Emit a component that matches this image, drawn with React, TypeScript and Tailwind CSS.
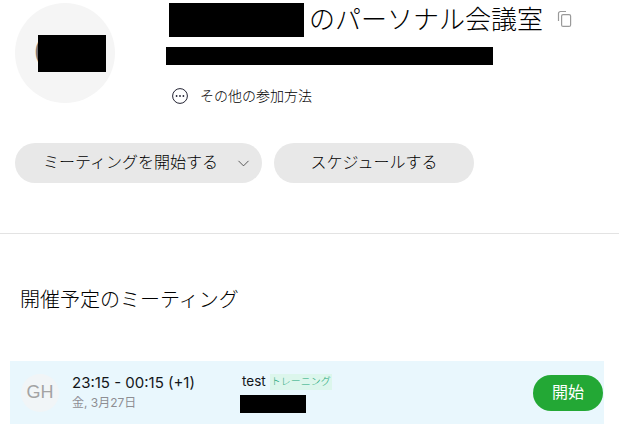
import React from 'react';
import { ChevronDown } from 'lucide-react';

const FONT = "font-['Liberation_Sans','Noto_Sans_CJK_JP',sans-serif]";
const LATIN = "font-['Inter','Noto_Sans_CJK_JP',sans-serif]";

const App: React.FC = () => (
  <div className={`w-[619px] h-[435px] overflow-hidden bg-white text-[#131619] ${FONT}`}>
    {/* profile */}
    <div className="flex pl-[15px] pt-[3px] h-[103px]">
      <div className="relative w-[100px] h-[100px] rounded-full bg-[#f5f5f5] shrink-0">
        <span className={`absolute left-[18px] top-[21px] text-[44px] leading-[56px] font-light text-[#777] ${LATIN}`}>G</span>
        <div className="absolute left-[23px] top-[32px] w-[68px] h-[37px] bg-black" />
      </div>
      <div className="ml-[51px]">
        <div className="flex items-center h-[34px] ml-[3px]">
          <div className="w-[135px] h-[34px] bg-black" />
          <span className="ml-[5px] text-[26px] leading-[34px] font-light whitespace-nowrap text-black">のパーソナル会議室</span>
          <svg className="ml-[14px] mt-[-2px] text-[#9a9a9a]" width="15" height="18" viewBox="0 0 15 18" fill="none" stroke="currentColor" strokeWidth="1.2">
            <rect x="4.6" y="4.6" width="9" height="11.8" rx="1.5" />
            <path d="M1.5 11V3.5A2 2 0 0 1 3.5 1.5h5.5" />
          </svg>
        </div>
        <div className="mt-[10px] w-[327px] h-[18px] bg-black" />
        <div className="flex items-center mt-[23px] ml-[6px]">
          <svg width="16" height="16" viewBox="0 0 16 16" fill="none" stroke="#232333" strokeWidth="1">
            <circle cx="8" cy="8" r="7.4" />
            <circle cx="4.6" cy="8" r="0.9" fill="#232333" stroke="none" />
            <circle cx="8" cy="8" r="0.9" fill="#232333" stroke="none" />
            <circle cx="11.4" cy="8" r="0.9" fill="#232333" stroke="none" />
          </svg>
          <span className="ml-[12px] text-[14px] leading-[16px] font-light whitespace-nowrap text-black">その他の参加方法</span>
        </div>
      </div>
    </div>

    {/* actions */}
    <div className="flex gap-[12px] pl-[15px] mt-[40px]">
      <button className="flex items-center w-[247px] h-[40px] rounded-[20px] bg-[#e8e8e8] pl-[28px] text-[16px] font-light text-black">
        <span className="whitespace-nowrap">ミーティングを開始する</span>
        <ChevronDown className="ml-[16px] w-[19px] h-[19px] text-[#333]" strokeWidth={1} />
      </button>
      <button className="w-[200px] h-[40px] rounded-[20px] bg-[#e8e8e8] text-[16px] font-light text-black whitespace-nowrap">スケジュールする</button>
    </div>

    <div className="mt-[50px] h-px bg-[#e3e3e3]" />

    <h2 className="mt-[52px] ml-[20px] text-[20px] leading-[28px] font-light text-black">開催予定のミーティング</h2>

    {/* meeting row */}
    <div className="flex items-center ml-[10px] mt-[47px] w-[594px] h-[63px] bg-[#e9f7fd]">
      <div className="ml-[11px] w-[38px] h-[38px] rounded-full bg-[#f1f5f7] flex items-center justify-center text-[18px] font-light text-[#a3a3a3] shrink-0">GH</div>
      <div className="ml-[13px] w-[168px] shrink-0 mb-[2px]">
        <div className={`text-[15px] leading-[20px] whitespace-nowrap ${LATIN}`}>23:15 - 00:15 (+1)</div>
        <div className={`mt-[2px] text-[12px] leading-[16px] text-[#8e8e93] whitespace-nowrap ${LATIN}`}>金, 3月27日</div>
      </div>
      <div className="flex-1 mb-[1px]">
        <div className="flex items-center h-[20px] ml-[2px] mb-[1px]">
          <span className={`text-[13.5px] ${LATIN}`}>test</span>
          <span className="ml-[4px] px-px text-[10px] leading-[16px] font-light text-[#23a879] bg-[#dcf6ec] whitespace-nowrap">トレーニング</span>
        </div>
        <div className="mt-[3px] w-[66px] h-[18px] bg-black" />
      </div>
      <button className="mr-px w-[70px] h-[36px] rounded-[18px] bg-[#23a835] text-white text-[16px]">開始</button>
    </div>
  </div>
);

export default App;
